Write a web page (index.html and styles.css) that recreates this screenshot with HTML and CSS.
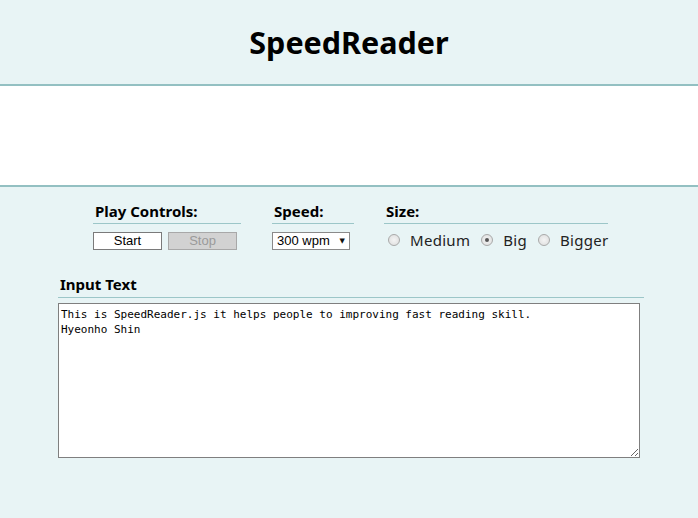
FILE: index.html
```html
<!DOCTYPE html>
<html>
<head>
<meta charset="utf-8">
<title>SpeedReader</title>
<link rel="stylesheet" href="styles.css">
</head>
<body>
<header class="header">
  <h1 class="title">SpeedReader</h1>
</header>
<section class="display"></section>
<main class="main">
  <div class="controls">
    <div class="group group-play">
      <h2 class="group-title">Play Controls:</h2>
      <div class="group-body">
        <button class="btn">Start</button>
        <button class="btn btn-disabled" disabled>Stop</button>
      </div>
    </div>
    <div class="group group-speed">
      <h2 class="group-title">Speed:</h2>
      <div class="group-body">
        <div class="select-wrap">
          <select class="select">
            <option>300 wpm</option>
          </select>
        </div>
      </div>
    </div>
    <div class="group group-size">
      <h2 class="group-title">Size:</h2>
      <div class="group-body radios">
        <label class="radio-label"><input type="radio" name="size" class="radio"> Medium</label>
        <label class="radio-label"><input type="radio" name="size" class="radio" checked> Big</label>
        <label class="radio-label"><input type="radio" name="size" class="radio"> Bigger</label>
      </div>
    </div>
  </div>
  <div class="input-section">
    <h2 class="input-title">Input Text</h2>
    <textarea class="input-area" spellcheck="false">This is SpeedReader.js it helps people to improving fast reading skill.
Hyeonho Shin</textarea>
  </div>
</main>
</body>
</html>
```

FILE: styles.css
```css
html, body {
  margin: 0;
  padding: 0;
}
body {
  background: #e8f4f5;
  font-family: "Noto Sans", "Open Sans", sans-serif;
  color: #000;
  width: 698px;
  height: 518px;
  overflow: hidden;
}
.header {
  height: 84px;
  border-bottom: 2px solid #93c0c2;
  display: flex;
  align-items: center;
  justify-content: center;
}
.title {
  margin: 0;
  font-size: 30.5px;
  font-weight: 700;
  line-height: 1;
  padding-top: 1px;
  letter-spacing: 0;
}
.display {
  height: 99px;
  background: #ffffff;
  border-bottom: 2px solid #93c0c2;
}
.main {
  padding: 0 0 0 58px;
}
.controls {
  display: flex;
  padding-left: 35px;
  padding-top: 14px;
  gap: 31px;
}
.group-title {
  margin: 0;
  font-size: 15px;
  font-weight: 700;
  line-height: 20px;
  padding-left: 2px;
  height: 22px;
  border-bottom: 1px solid #9cc6c8;
  box-sizing: content-box;
}
.group-play { width: 148px; }
.group-speed { width: 82px; }
.group-size { width: 224px; margin-left: -1px; }
.group-body {
  display: flex;
  align-items: flex-start;
  padding-top: 8px;
  gap: 6px;
}
.btn {
  width: 69px;
  height: 18px;
  padding: 0;
  margin: 0;
  border: 1px solid #7a7a7a;
  background: #ffffff;
  font-family: "Liberation Sans", Arial, sans-serif;
  font-size: 13px;
  color: #000;
  line-height: 16px;
}
.btn-disabled {
  background: #d2d2d2;
  border-color: #a8a8a8;
  color: #9a9a9a;
}
.select-wrap {
  position: relative;
  width: 78px;
  height: 18px;
}
.select {
  appearance: none;
  -webkit-appearance: none;
  display: block;
  width: 78px;
  height: 18px;
  margin: 0;
  padding: 0 0 0 4px;
  border: 1px solid #8a8a8a;
  background: #ffffff;
  font-family: "Liberation Sans", Arial, sans-serif;
  font-size: 13px;
  color: #000;
  border-radius: 0;
  line-height: 16px;
}
.select-wrap::after {
  content: "\25BC";
  position: absolute;
  right: 5px;
  top: 4px;
  font-family: "DejaVu Sans", sans-serif;
  font-size: 7px;
  line-height: 10px;
  color: #111;
  pointer-events: none;
}
.radios {
  gap: 11px;
  padding-top: 6px;
  padding-left: 4px;
}
.radio-label {
  display: flex;
  align-items: center;
  font-size: 15px;
  line-height: 20px;
  color: #222;
  gap: 10px;
  letter-spacing: 0.3px;
}
.radio {
  appearance: none;
  -webkit-appearance: none;
  margin: 0;
  width: 12px;
  height: 12px;
  border-radius: 50%;
  border: 1px solid #a9a9a9;
  background: radial-gradient(circle, #f4f4f4 0%, #dcdcdc 100%);
  box-sizing: border-box;
  position: relative;
}
.radio:checked::after {
  content: "";
  position: absolute;
  left: 3px;
  top: 3px;
  width: 4px;
  height: 4px;
  border-radius: 50%;
  background: #555;
}
.input-section {
  padding-top: 24px;
  width: 586px;
}
.input-title {
  margin: 0;
  font-size: 15px;
  font-weight: 700;
  line-height: 20px;
  padding-left: 2px;
  height: 23px;
  border-bottom: 1px solid #9cc6c8;
  box-sizing: content-box;
}
.input-area {
  display: block;
  margin-top: 5px;
  width: 582px;
  height: 155px;
  box-sizing: border-box;
  border: 1px solid #7f7f7f;
  background: #ffffff;
  padding: 3px 2px;
  font-family: "DejaVu Sans Mono", "Liberation Mono", monospace;
  font-size: 11px;
  line-height: 15px;
  color: #000;
  resize: both;
  outline: none;
}
```
